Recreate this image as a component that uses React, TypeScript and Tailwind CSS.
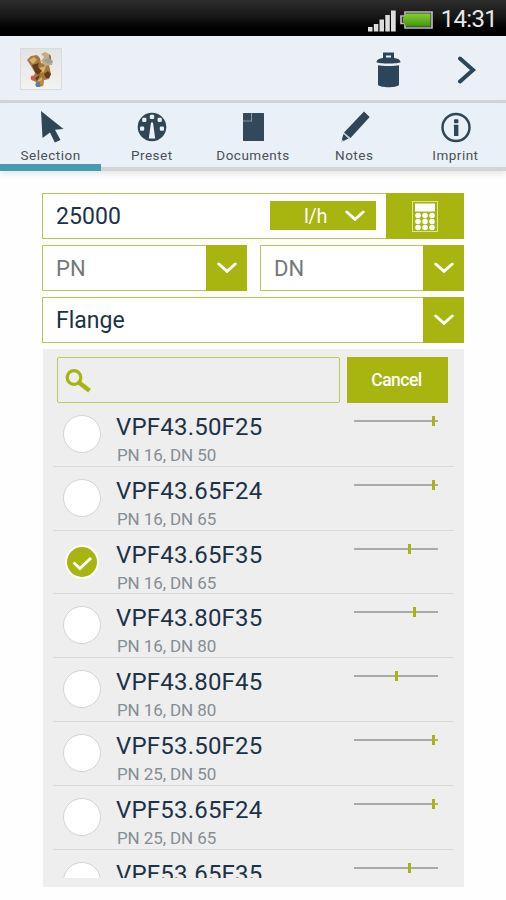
import React, { useState } from "react";

interface Valve {
  id: string;
  name: string;
  info?: string;
  mark: number;
}

const valves: Valve[] = [
  { id: "v1", name: "VPF43.50F25", info: "PN 16, DN 50", mark: 79 },
  { id: "v2", name: "VPF43.65F24", info: "PN 16, DN 65", mark: 79 },
  { id: "v3", name: "VPF43.65F35", info: "PN 16, DN 65", mark: 55 },
  { id: "v4", name: "VPF43.80F35", info: "PN 16, DN 80", mark: 60 },
  { id: "v5", name: "VPF43.80F45", info: "PN 16, DN 80", mark: 42 },
  { id: "v6", name: "VPF53.50F25", info: "PN 25, DN 50", mark: 79 },
  { id: "v7", name: "VPF53.65F24", info: "PN 25, DN 65", mark: 79 },
  { id: "v8", name: "VPF53.65F35", mark: 55 },
];

function SelectionIcon() {
  return (
    <svg className="ml-[2px]" width="24" height="32" viewBox="0 0 24 32">
      <path d="M1 0 L23.500 18 L15 18.800 L20.500 29 L14.800 31.500 L10 21.500 L2.500 27 Z" fill="#2f4656" />
    </svg>
  );
}

function PresetIcon() {
  return (
    <svg width="30" height="30" viewBox="0 0 30 30">
      <circle cx="15" cy="15" r="14.300" fill="#2f4656" />
      <g fill="#edf1f6">
        <rect x="12.800" y="2.800" width="4.400" height="4.200" rx="1.200" />
        <rect x="5.200" y="5.800" width="4.200" height="4.200" rx="1.200" />
        <rect x="20.600" y="5.800" width="4.200" height="4.200" rx="1.200" />
        <rect x="3" y="14.500" width="4.200" height="4.200" rx="1.200" />
        <rect x="22.800" y="14.500" width="4.200" height="4.200" rx="1.200" />
        <path d="M14 10.500 H16 L18.200 26.500 H11.800 Z" />
      </g>
    </svg>
  );
}

function DocumentIcon() {
  return (
    <svg className="ml-px" width="21" height="28" viewBox="0 0 21 28">
      <rect width="21" height="28" rx="0.500" fill="#33485a" />
      <path d="M8.500 0 V8 H0" fill="none" stroke="#8494a0" strokeWidth="1.100" />
    </svg>
  );
}

function NotesIcon() {
  return (
    <svg className="ml-[3px]" width="32" height="32" viewBox="0 0 32 32">
      <path d="M24 0.500 L29.700 6 L10.500 27 L4 21.500 Z" fill="#2f4656" />
      <path d="M3.500 23 L8.500 27.600 L3.500 30 L1.800 28.500 Z" fill="#2f4656" />
      <path d="M1.800 28.800 L3.800 30.200 L1 31.500 Z" fill="#b5bfc6" />
      <path d="M3.700 22.500 L9.500 27.800" stroke="#8b9aa5" strokeWidth="0.800" />
    </svg>
  );
}

function ImprintIcon() {
  return (
    <svg className="ml-px" width="30" height="31" viewBox="0 0 30 31">
      <circle cx="15" cy="15.500" r="13.500" fill="none" stroke="#2f4656" strokeWidth="2.500" />
      <rect x="13" y="7.200" width="4.400" height="4" rx="0.800" fill="#2f4656" />
      <path d="M12.800 12.800 H17.400 V24 H13 V14.500 H12.800 Z" fill="#2f4656" />
    </svg>
  );
}

function TrashIcon() {
  return (
    <svg width="25" height="36" viewBox="0 0 25 36">
      <path d="M8.500 6.500 V2 H16.500 V6.500" fill="none" stroke="#2c4558" strokeWidth="3" />
      <path d="M0.500 10.300 C0.500 7 5 5.500 12.500 5.500 S24.500 7 24.500 10.300 C22 12 3 12 0.500 10.300 Z" fill="#2c4558" />
      <path d="M2 13.200 C6 14.200 19 14.200 23 13.200 V33 C20 36 5 36 2 33 Z" fill="#2c4558" />
    </svg>
  );
}

function ProductImage() {
  return (
    <svg width="42" height="42" viewBox="0 0 42 42">
      <defs>
        <linearGradient id="frame" x1="0" y1="0" x2="0" y2="1">
          <stop offset="0" stopColor="#e2e3e3" />
          <stop offset="1" stopColor="#f3f3f1" />
        </linearGradient>
      </defs>
      <rect x="0.500" y="0.500" width="41" height="41" fill="url(#frame)" stroke="#d9dcdf" />
      <path d="M7 12 L11 8 L17 7 L20 10 L21 15 L29 17 L31 26 L29 31 L24 32 L23 38 L18 39 L16 34 L12 32 L15 25 L11 18 Z" fill="#a3783e" />
      <path d="M21 6 L25 4 L29 6 L30 10 L33 13 L32 17 L25 18 L21 13 L24 9 Z" fill="#c5ad80" />
      <path d="M9 12 L14 9 L17 12 L13 16 Z M19 20 L26 18 L24 24 L20 25 Z M17 33 L22 29 L22 34 Z" fill="#d6b26c" />
      <path d="M12 17 L19 15 L18 19 L22 23 L18 27 L15 24 Z M24 26 L28 23 L31 26 L29 30 L26 30 Z M15 30 L20 27 L17 33 Z" fill="#633b1b" />
      <path d="M23 12 L29 10 L33 14 L28 16 Z" fill="#9d9f9c" />
      <path d="M29 6 L31 8 L31 12 L29 10 Z" fill="#8a7656" />
      <circle cx="13" cy="30" r="2.400" fill="#c9604f" />
      <circle cx="18" cy="36.500" r="2.600" fill="#5e7e9c" />
      <path d="M20 33 L24 31 L23 38 L20 37 Z" fill="#b38b42" />
    </svg>
  );
}

function Chevron() {
  return (
    <svg width="20" height="12" viewBox="0 0 20 12">
      <path d="M1.800 2 L10 9.300 L18.200 2" fill="none" stroke="#fff" strokeWidth="3" strokeLinecap="round" />
    </svg>
  );
}

function Calculator() {
  return (
    <svg width="26" height="31" viewBox="0 0 26 31">
      <rect x="0.500" y="0.500" width="25" height="30" fill="none" stroke="#dbe29a" />
      <rect x="3" y="2.500" width="20" height="8" fill="#fff" />
      {[14.5, 20.5, 26.5].map((y) =>
        [6, 13, 20].map((x) => <circle key={`${x}-${y}`} cx={x} cy={y} r="2.800" fill="#fff" />)
      )}
    </svg>
  );
}

function StatusBar() {
  return (
    <div className="h-9 bg-gradient-to-b from-[#2d2d2d] via-[#151515] to-[#000000] flex items-start justify-end pr-[9px]">
      <svg className="mt-[10px]" width="28" height="22" viewBox="0 0 28 22">
        <g fill="#dedede">
          <rect x="0" y="17" width="4.500" height="4.500" />
          <rect x="5.800" y="14" width="4.500" height="7.500" />
          <rect x="11.500" y="9.500" width="4.500" height="12" />
          <rect x="17.300" y="5" width="4.500" height="16.500" />
          <rect x="23" y="0.500" width="4.700" height="21" />
        </g>
      </svg>
      <svg className="mt-[11px] ml-[4px]" width="33" height="18" viewBox="0 0 33 18">
        <defs>
          <linearGradient id="battery" x1="0" y1="0" x2="0" y2="1">
            <stop offset="0" stopColor="#86d02f" />
            <stop offset="1" stopColor="#3f9413" />
          </linearGradient>
        </defs>
        <path d="M5 1 H32 V17 H5 V12.500 H1 V5 H5 Z" fill="#333" stroke="#b9b9b9" strokeWidth="1.700" />
        <path d="M6.500 2.500 H30.500 V15.500 H6.500 L3 11 V7 Z" fill="url(#battery)" />
      </svg>
      <span className="ml-[8px] mt-[5px] text-[24px] leading-[28px] tracking-[-0.7px] text-[#e8e8e8]">14:31</span>
    </div>
  );
}

const tabs = [
  { id: "selection", label: "Selection", icon: <SelectionIcon /> },
  { id: "preset", label: "Preset", icon: <PresetIcon /> },
  { id: "documents", label: "Documents", icon: <DocumentIcon /> },
  { id: "notes", label: "Notes", icon: <NotesIcon /> },
  { id: "imprint", label: "Imprint", icon: <ImprintIcon /> },
];

interface SelectFieldProps {
  label: string;
  className: string;
}

function SelectField({ label, className }: SelectFieldProps) {
  return (
    <div className={`flex h-[46px] border-[1.5px] border-[#b6c84f] bg-white ${className}`}>
      <span className="flex-1 pl-[13px] leading-[46px]">{label}</span>
      <button className="-my-px -mr-px w-[41px] bg-[#a8b40f] flex items-center justify-center">
        <Chevron />
      </button>
    </div>
  );
}

export default function App() {
  const [activeTab, setActiveTab] = useState("selection");
  const [selected, setSelected] = useState("v3");

  return (
    <div className="h-[900px] w-[506px] overflow-hidden bg-[#fefefe] font-['Roboto','Liberation_Sans',sans-serif] text-[#1c3347]">
      <StatusBar />

      {/* Header */}
      <div className="h-[67px] bg-[#eaf0f6] border-b-[3px] border-[#d1d5d7] flex items-start">
        <div className="ml-[20px] mt-[12px]">
          <ProductImage />
        </div>
        <button className="ml-auto mt-[16px]">
          <TrashIcon />
        </button>
        <button className="ml-[55px] mt-[20px] mr-[29px]">
          <svg width="21" height="28" viewBox="0 0 21 28">
            <path d="M4 2.500 L17 14 L4 25.500" fill="none" stroke="#2c4558" strokeWidth="4" strokeLinecap="round" />
          </svg>
        </button>
      </div>

      {/* Tabs */}
      <div className="h-[68px] bg-[#eaf0f7] grid grid-cols-5 shadow-[0_3px_6px_rgba(0,0,0,0.10)]">
        {tabs.map((tab) => (
          <button
            key={tab.id}
            onClick={() => setActiveTab(tab.id)}
            className={`flex flex-col items-center ${
              activeTab === tab.id ? "border-b-[7px] border-[#459bb2]" : "border-b-[4px] border-[#d1d5d7]"
            }`}
          >
            <span className="h-[44px] pt-[4px] flex items-center">{tab.icon}</span>
            <span className="text-[13.5px] leading-[17px] tracking-[0.5px] text-[#4b5156]">{tab.label}</span>
          </button>
        ))}
      </div>

      <div className="ml-[42px] mt-[22px] w-[422px]">
        {/* Flow rate */}
        <div className="h-[46px] flex border-[1.5px] border-[#b6c84f] bg-white">
          <span className="flex-1 pl-[13px] text-[23px] leading-[46px] tracking-[0.1px]">25000</span>
          <button className="mt-[7px] w-[106px] h-[29px] bg-[#a8b40f] text-white flex items-center pl-[34px]">
            <span className="w-[41px] text-left text-[20px] leading-[30px] tracking-[-0.3px]">l/h</span>
            <Chevron />
          </button>
          <button className="-my-px -mr-px ml-[10px] w-[78px] bg-[#a8b40f] flex items-center justify-center">
            <Calculator />
          </button>
        </div>

        <div className="mt-[6px] flex justify-between text-[22px] text-[#74787b]">
          <SelectField label="PN" className="w-[205px]" />
          <SelectField label="DN" className="w-[204px]" />
        </div>
        <SelectField label="Flange" className="mt-[6px] text-[23px]" />

        {/* Product list */}
        <div className="mt-[6px] h-[538px] bg-[#eeeeee] px-[10px] pt-[8px] ml-px">
          <div className="flex h-[46px] pl-[4px] pr-[6px] gap-[7px]">
            <div className="flex-1 rounded-[2px] border-[1.5px] border-[#b9c95c] pl-[7px] pt-[11px]">
              <svg width="27" height="26" viewBox="0 0 27 26">
                <circle cx="9" cy="8.500" r="6.800" fill="none" stroke="#a8b40f" strokeWidth="3.200" />
                <path d="M14 13.500 L24.500 21.700" stroke="#a8b40f" strokeWidth="4.500" />
              </svg>
            </div>
            <button className="w-[101px] bg-[#a8b40f] text-[17.5px] font-medium tracking-[-0.5px] pt-px pr-[2px] text-white">
              Cancel
            </button>
          </div>

          <div className="h-[475px] overflow-hidden">
            {valves.map((valve) => (
              <div
                key={valve.id}
                onClick={() => setSelected(valve.id)}
                className="h-[63.8px] border-b border-[#d8d9da] flex"
              >
                {selected === valve.id ? (
                  <svg className="ml-[10px] mt-[12px]" width="38" height="38" viewBox="0 0 38 38">
                    <circle cx="19" cy="19" r="17" fill="#fff" />
                    <circle cx="19" cy="19" r="15" fill="#a8b40f" />
                    <path d="M10.500 19.500 L17 25.500 L28 15" fill="none" stroke="#fff" strokeWidth="3" />
                  </svg>
                ) : (
                  <div className="ml-[10px] mt-[12px] w-[38px] h-[38px] rounded-full border-[1.5px] border-[#d3d4d5] bg-white" />
                )}
                <div className="ml-[15px] pt-[9px]">
                  <div className="text-[24px] leading-[30px] tracking-[0.2px]">{valve.name}</div>
                  {valve.info && (
                    <div className="text-[17px] leading-[26px] tracking-[-0.1px] text-[#858d94] pl-px">{valve.info}</div>
                  )}
                </div>
                <div className="relative ml-auto mt-[17px] mr-[16px] w-[84px] h-[2px] bg-[#a9aaaa]">
                  <div className="absolute -top-[4px] w-[3px] h-[10px] -ml-[1px] bg-[#a8b40f]" style={{ left: valve.mark }} />
                </div>
              </div>
            ))}
          </div>
        </div>
      </div>
    </div>
  );
}
